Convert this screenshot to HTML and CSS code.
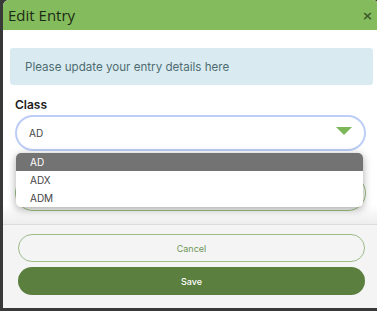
FILE: index.html
```html
<!DOCTYPE html>
<html lang="en">
<head>
    <meta charset="UTF-8">
    <meta name="viewport" content="width=device-width, initial-scale=1.0">
    <title>Edit Entry</title>
    <link rel="stylesheet" href="styles.css">
</head>
<body>
    <div class="modal">
        <header class="modal-header">
            <span class="modal-title">Edit Entry</span>
            <span class="close">&times;</span>
        </header>

        <main class="modal-body">
            <div class="info">Please update your entry details here</div>

            <label class="field-label">Class</label>
            <div class="select-wrap">
                <div class="select">
                    <span>AD</span>
                    <svg class="caret" width="16" height="8" viewBox="0 0 16 8">
                        <polygon points="0,0 16,0 8,8" fill="#7cb85a"/>
                    </svg>
                </div>
                <div class="next-field"></div>
                <!-- open dropdown -->
                <ul class="options">
                    <li class="active">AD</li>
                    <li>ADX</li>
                    <li>ADM</li>
                </ul>
            </div>
        </main>

        <footer class="modal-footer">
            <button class="btn btn-cancel">Cancel</button>
            <button class="btn btn-save">Save</button>
        </footer>
    </div>
</body>
</html>
```

FILE: styles.css
```css
body {
    margin: 0;
    background: #383838;
    font-family: "Inter", "Liberation Sans", sans-serif;
    height: 311px;
    overflow: hidden;
}

.modal {
    margin-left: 3px;
    width: 376px;
    height: 308px;
    background: #ffffff;
    border-radius: 6px 6px 0 0;
    overflow: hidden;
    display: flex;
    flex-direction: column;
}

.modal-header {
    height: 30px;
    background: #84bb5c;
    display: flex;
    align-items: center;
    justify-content: space-between;
    padding: 0 6px 0 5px;
}

.modal-title {
    font-family: "Open Sans", sans-serif;
    font-size: 15px;
    color: #1b2a14;
}

.close {
    font-family: "DejaVu Sans", sans-serif;
    font-size: 13px;
    font-weight: bold;
    color: #3d5a2a;
}

.modal-body {
    padding: 18px 6px 0 7px;
    background: linear-gradient(#ffffff 175px, #eeeeee 193px);
    height: 176px;
    overflow: hidden;
}

.info {
    background: #d9ebf0;
    border-radius: 3px;
    height: 37px;
    display: flex;
    align-items: center;
    padding-left: 15px;
    font-size: 11.6px;
    color: #4f6b72;
}

.field-label {
    display: block;
    margin: 12px 0 0 5px;
    font-size: 12px;
    font-weight: 600;
    color: #222;
}

.select-wrap {
    position: relative;
    margin: 3px 0 0 5px;
    width: 351px;
}

.select {
    height: 32px;
    border: 2px solid #bccdf6;
    border-radius: 18px;
    display: flex;
    align-items: center;
    justify-content: space-between;
    padding: 0 12px 0 12px;
    font-size: 10px;
    color: #444;
}

.caret {
    margin-top: -4px;
}

.next-field {
    margin-top: 24px;
    height: 34px;
    border: 1px solid #9cc07f;
    border-radius: 18px;
}

.options {
    position: absolute;
    top: 38px;
    left: 1px;
    width: 347px;
    margin: 0;
    padding: 0;
    list-style: none;
    background: #fff;
    border-radius: 5px;
    overflow: hidden;
    box-shadow: 0 2px 8px rgba(0, 0, 0, 0.35);
    font-size: 10px;
    color: #444;
}

.options li {
    height: 18px;
    line-height: 18px;
    padding-left: 14px;
}

.options li.active {
    background: #737373;
    color: #fff;
}

.modal-footer {
    flex: 1;
    background: #f4f4f4;
    border-top: 1px solid #dcdcdc;
    display: flex;
    flex-direction: column;
    gap: 5px;
    padding: 9px 14px 0 15px;
}

.btn {
    height: 28px;
    border-radius: 14px;
    font-family: "Inter", sans-serif;
    font-size: 9px;
    cursor: pointer;
}

.btn-cancel {
    background: transparent;
    border: 1px solid #9cba86;
    color: #6d9657;
}

.btn-save {
    background: #5a7f3e;
    border: none;
    color: #fff;
    font-weight: 500;
}
```
